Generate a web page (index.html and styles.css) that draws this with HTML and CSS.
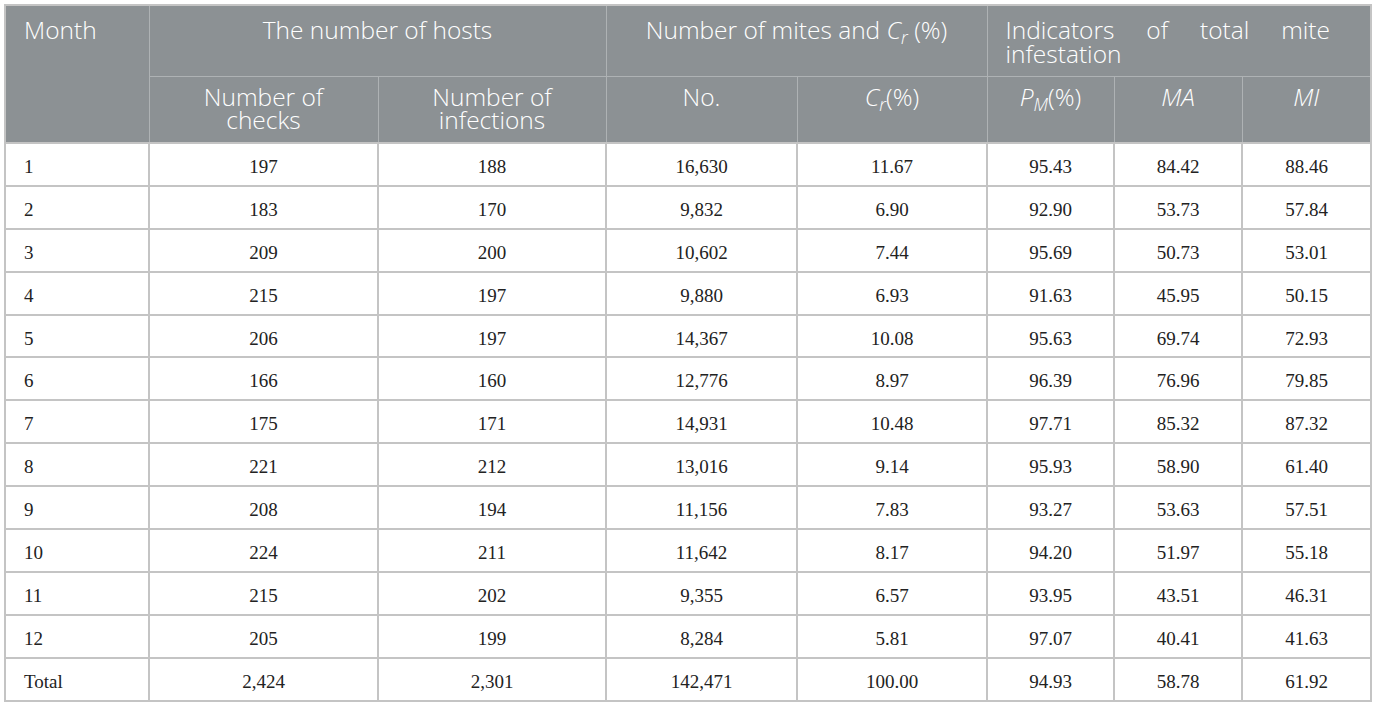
FILE: index.html
```html
<!DOCTYPE html>
<html lang="en">
<head>
<meta charset="utf-8">
<title>Mite infestation by month</title>
<link rel="stylesheet" href="styles.css">
</head>
<body>
<table class="data">
  <colgroup>
    <col class="c-month">
    <col class="c-checks">
    <col class="c-inf">
    <col class="c-no">
    <col class="c-cr">
    <col class="c-pm">
    <col class="c-ma">
    <col class="c-mi">
  </colgroup>
  <thead>
    <tr class="h1">
      <th rowspan="2" class="left month">Month</th>
      <th colspan="2">The number of hosts</th>
      <th colspan="2">Number of mites and <i>C<sub>r</sub></i> (%)</th>
      <th colspan="3" class="just">Indicators of total mite infestation</th>
    </tr>
    <tr class="h2">
      <th>Number of checks</th>
      <th>Number of infections</th>
      <th>No.</th>
      <th><i>C<sub>r</sub></i>(%)</th>
      <th><i>P<sub>M</sub></i>(%)</th>
      <th><i>MA</i></th>
      <th><i>MI</i></th>
    </tr>
  </thead>
  <tbody>
    <tr><td class="left">1</td><td>197</td><td>188</td><td>16,630</td><td>11.67</td><td>95.43</td><td>84.42</td><td>88.46</td></tr>
    <tr><td class="left">2</td><td>183</td><td>170</td><td>9,832</td><td>6.90</td><td>92.90</td><td>53.73</td><td>57.84</td></tr>
    <tr><td class="left">3</td><td>209</td><td>200</td><td>10,602</td><td>7.44</td><td>95.69</td><td>50.73</td><td>53.01</td></tr>
    <tr><td class="left">4</td><td>215</td><td>197</td><td>9,880</td><td>6.93</td><td>91.63</td><td>45.95</td><td>50.15</td></tr>
    <tr><td class="left">5</td><td>206</td><td>197</td><td>14,367</td><td>10.08</td><td>95.63</td><td>69.74</td><td>72.93</td></tr>
    <tr><td class="left">6</td><td>166</td><td>160</td><td>12,776</td><td>8.97</td><td>96.39</td><td>76.96</td><td>79.85</td></tr>
    <tr><td class="left">7</td><td>175</td><td>171</td><td>14,931</td><td>10.48</td><td>97.71</td><td>85.32</td><td>87.32</td></tr>
    <tr><td class="left">8</td><td>221</td><td>212</td><td>13,016</td><td>9.14</td><td>95.93</td><td>58.90</td><td>61.40</td></tr>
    <tr><td class="left">9</td><td>208</td><td>194</td><td>11,156</td><td>7.83</td><td>93.27</td><td>53.63</td><td>57.51</td></tr>
    <tr><td class="left">10</td><td>224</td><td>211</td><td>11,642</td><td>8.17</td><td>94.20</td><td>51.97</td><td>55.18</td></tr>
    <tr><td class="left">11</td><td>215</td><td>202</td><td>9,355</td><td>6.57</td><td>93.95</td><td>43.51</td><td>46.31</td></tr>
    <tr><td class="left">12</td><td>205</td><td>199</td><td>8,284</td><td>5.81</td><td>97.07</td><td>40.41</td><td>41.63</td></tr>
    <tr><td class="left">Total</td><td>2,424</td><td>2,301</td><td>142,471</td><td>100.00</td><td>94.93</td><td>58.78</td><td>61.92</td></tr>
  </tbody>
</table>
</body>
</html>
```

FILE: styles.css
```css
html, body {
  margin: 0;
  padding: 0;
  background: #ffffff;
}

body {
  padding: 4px;
}

.data {
  width: 1366px;
  table-layout: fixed;
  border-collapse: collapse;
  border: 2px solid #c4c4c4;
}

.c-month { width: 144px; }
.c-checks { width: 229px; }
.c-inf { width: 228px; }
.c-no { width: 191px; }
.c-cr { width: 190px; }
.c-pm { width: 127px; }
.c-ma { width: 128px; }
.c-mi { width: 129px; }

.data th {
  background: #8c9194;
  color: #ffffff;
  font-family: "Open Sans", "Noto Sans", sans-serif;
  font-weight: 360;
  font-size: 24.5px;
  line-height: 23.5px;
  text-align: center;
  vertical-align: top;
  border: 1px solid #aeb2b4;
  padding: 0 18px;
}

.data tr.h1 th {
  height: 71px;
  padding-top: 12px;
  box-sizing: border-box;
}

.data tr.h2 th {
  height: 67px;
  padding-top: 8px;
  box-sizing: border-box;
}

.data th.left {
  text-align: left;
}

.data th.just {
  text-align: justify;
  text-align-last: left;
  padding-right: 40px;
}

.data th i {
  font-style: italic;
}

.data sub {
  font-size: 0.72em;
  line-height: 0;
  vertical-align: -0.3em;
}

.data td {
  font-family: "Liberation Serif", "Times New Roman", serif;
  font-size: 19px;
  color: #222222;
  text-align: center;
  vertical-align: middle;
  border: 2px solid #c4c4c4;
  height: 42.9px;
  padding: 5px 10px 0;
  box-sizing: border-box;
}

.data td.left {
  text-align: left;
  padding-left: 18px;
}
```
